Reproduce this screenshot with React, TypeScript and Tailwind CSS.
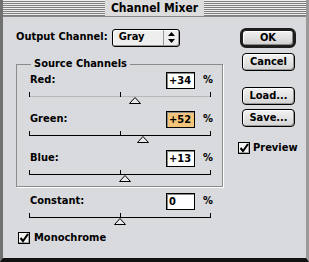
import React from 'react';

const font = "font-['Liberation_Sans_Narrow','DejaVu_Sans_Condensed','Liberation_Sans',sans-serif]";

function Slider({ value, faint }: { value: number; faint?: boolean }) {
  // range -200..+200 over 181px track
  const pos = Math.round(((value + 200) / 400) * 181);
  return (
    <div className="relative h-[12px] w-[182px]">
      <div className={`absolute left-0 right-0 top-[4px] h-px ${faint ? 'bg-[#b8b8b8]' : 'bg-black'}`} />
      <div className="absolute left-0 top-0 h-[5px] w-px bg-black" />
      <div className="absolute left-[91px] top-0 h-[5px] w-px bg-black" />
      <div className="absolute right-0 top-0 h-[5px] w-px bg-black" />
      <svg className="absolute top-[5px]" style={{ left: pos - 6 }} width="12" height="7" viewBox="0 0 12 7">
        <path d="M6 0.5 L11.5 6.5 L0.5 6.5 Z" fill="#e8e8e8" stroke="#000" strokeWidth="1" />
      </svg>
    </div>
  );
}

function ValueRow({ label, value, hilite, faint }: { label: string; value: string; hilite?: boolean; faint?: boolean }) {
  const n = parseInt(value, 10) || 0;
  return (
    <div className="flex flex-col">
      <div className="flex items-center h-[17px]">
        <span className="w-[136px] text-[11px] font-bold">{label}</span>
        <div className={`w-[29px] h-[17px] border border-black px-[2px] text-[11px] font-bold leading-[15px] shadow-[inset_1px_1px_0_#888] ${hilite ? 'bg-[#f3c57b]' : 'bg-white'}`}>
          {value}
        </div>
        <span className="ml-[8px] text-[11px] font-bold">%</span>
      </div>
      <div className="mt-[3px] -ml-[1px]">
        <Slider value={n} faint={faint} />
      </div>
    </div>
  );
}

function Button({ children }: { children: React.ReactNode }) {
  return (
    <div className="h-[18px] w-[53px] rounded-[4px] border border-black bg-[linear-gradient(#f2f2f2,#d4d4d4)] shadow-[inset_-1px_-1px_0_#999,inset_1px_1px_0_#fff] flex items-center justify-center text-[11px] font-bold">
      {children}
    </div>
  );
}

function Checkbox({ checked }: { checked?: boolean }) {
  return (
    <div className="h-[12px] w-[12px] border border-black bg-[#f4f4f4] shadow-[inset_-1px_-1px_0_#aaa]">
      {checked && (
        <svg width="10" height="10" viewBox="0 0 10 10">
          <path d="M1.5 5 L4 8 L9 1" fill="none" stroke="#000" strokeWidth="2" />
        </svg>
      )}
    </div>
  );
}

export default function App() {
  return (
    <div className={`w-[309px] h-[262px] bg-[#d9dadd] text-black ${font} flex flex-col border-l-[3px] border-l-[#707070] border-b-[4px] border-b-[#111] border-r-[3px] border-r-[#9a9a9a] overflow-hidden`}>
      {/* title bar */}
      <div className="h-[17px] flex items-center bg-[repeating-linear-gradient(to_bottom,#efefef_0px,#efefef_1px,#7d7d7d_1px,#7d7d7d_2px)] border-b border-[#888]">
        <div className="mx-auto px-[6px] bg-[#dcdcdc] h-full flex items-center text-[12px] font-bold leading-none">
          Channel Mixer
        </div>
      </div>

      <div className="flex flex-1">
        {/* left column */}
        <div className="w-[230px] pl-[13px] pt-[12px] flex flex-col">
          <div className="flex items-center h-[17px]">
            <span className="text-[11px] font-bold mr-[4px]">Output Channel:</span>
            <div className="w-[68px] h-[18px] rounded-[3px] border border-black bg-[#eee] shadow-[inset_-1px_-1px_0_#999,inset_1px_1px_0_#fff] flex items-center text-[11px] font-bold">
              <span className="flex-1 pl-[6px]">Gray</span>
              <span className="w-[16px] h-full border-l border-[#999] flex items-center justify-center">
                <svg width="7" height="11" viewBox="0 0 7 11">
                  <path d="M3.5 0 L7 4 L0 4 Z M0 7 L7 7 L3.5 11 Z" fill="#000" />
                </svg>
              </span>
            </div>
          </div>

          {/* source channels group */}
          <div className="relative mt-[18px] w-[207px] h-[123px] border border-[#8c8c8c] shadow-[1px_1px_0_#fff] pl-[13px] pt-[7px] flex flex-col gap-[7px]">
            <span className="absolute -top-[8px] left-[14px] px-[3px] bg-[#d9dadd] text-[11px] font-bold leading-[14px]">
              Source Channels
            </span>
            <ValueRow label="Red:" value="+34" faint />
            <ValueRow label="Green:" value="+52" hilite />
            <ValueRow label="Blue:" value="+13" />
          </div>

          <div className="mt-[6px] pl-[14px]">
            <ValueRow label="Constant:" value="0" />
          </div>

          <div className="mt-[5px] ml-[2px] flex items-center gap-[4px]">
            <Checkbox checked />
            <span className="text-[11px] font-bold">Monochrome</span>
          </div>
        </div>

        {/* right column */}
        <div className="flex flex-col items-start pl-[7px] pt-[11px]">
          <div className="h-[20px] w-[56px] rounded-[6px] border-[3px] border-[#1e1e1e] bg-[linear-gradient(#f2f2f2,#d0d0d0)] shadow-[inset_1px_1px_0_#fff,inset_-1px_-1px_0_#888] flex items-center justify-center text-[11px] font-bold">
            OK
          </div>
          <div className="mt-[5px] ml-[2px]">
            <Button>Cancel</Button>
          </div>
          <div className="mt-[16px] ml-[2px]">
            <Button>Load...</Button>
          </div>
          <div className="mt-[4px] ml-[2px]">
            <Button>Save...</Button>
          </div>
          <div className="mt-[13px] -ml-[2px] flex items-center gap-[3px]">
            <Checkbox checked />
            <span className="text-[11px] font-bold">Preview</span>
          </div>
        </div>
      </div>
    </div>
  );
}
